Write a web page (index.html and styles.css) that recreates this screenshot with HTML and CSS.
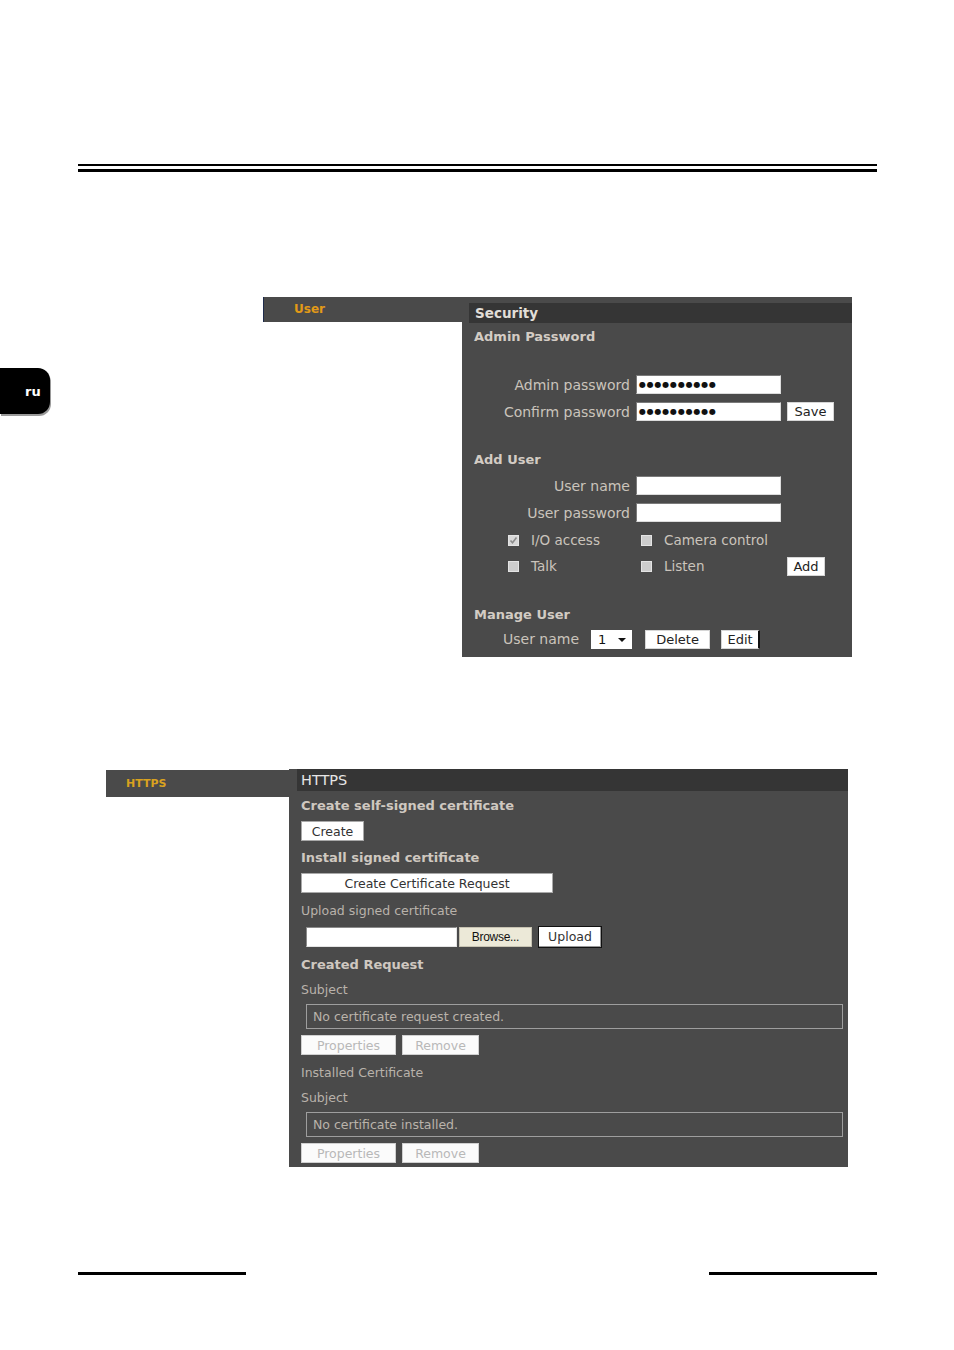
FILE: index.html
```html
<!DOCTYPE html>
<html lang="en">
<head>
    <meta charset="UTF-8">
    <meta name="viewport" content="width=device-width, initial-scale=1.0">
    <title>Security / HTTPS</title>
    <link rel="stylesheet" href="styles.css">
</head>
<body>

    <div class="side-tab">ru</div>

    <div class="page">
        <div class="rule-double">
            <div class="rule-thin"></div>
            <div class="rule-thick"></div>
        </div>

        <!-- Security screen -->
        <div class="shot shot-security">
            <div class="nav">
                <div class="nav-item">User</div>
            </div>
            <div class="panel">
                <div class="panel-head">Security</div>

                <div class="section-title first">Admin Password</div>
                <div class="rows rows-admin">
                    <div class="form-row">
                        <span class="label">Admin password</span>
                        <span class="field pw">●●●●●●●●●●</span>
                    </div>
                    <div class="form-row">
                        <span class="label">Confirm password</span>
                        <span class="field pw">●●●●●●●●●●</span>
                        <button class="btn btn-save">Save</button>
                    </div>
                </div>

                <div class="section-title add-user">Add User</div>
                <div class="rows rows-user">
                    <div class="form-row">
                        <span class="label">User name</span>
                        <span class="field"></span>
                    </div>
                    <div class="form-row">
                        <span class="label">User password</span>
                        <span class="field"></span>
                    </div>
                </div>

                <div class="opts">
                    <div class="opt-row">
                        <span class="opt"><span class="check checked"><svg width="9" height="9" viewBox="0 0 9 9"><path d="M1.5 4.5 L3.5 6.8 L7.5 1.5" fill="none" stroke="#8c8c8c" stroke-width="1.6"/></svg></span>I/O access</span>
                        <span class="opt"><span class="check"></span>Camera control</span>
                    </div>
                    <div class="opt-row">
                        <span class="opt"><span class="check"></span>Talk</span>
                        <span class="opt"><span class="check"></span>Listen</span>
                        <button class="btn btn-add">Add</button>
                    </div>
                </div>

                <div class="section-title manage">Manage User</div>
                <div class="manage-row">
                    <span class="label">User name</span>
                    <span class="select">1<span class="arrow"></span></span>
                    <button class="btn btn-delete">Delete</button>
                    <button class="btn btn-edit">Edit</button>
                </div>
            </div>
        </div>

        <!-- HTTPS screen -->
        <div class="shot shot-https">
            <div class="nav">
                <div class="nav-item">HTTPS</div>
            </div>
            <div class="panel">
                <div class="panel-head">HTTPS</div>

                <div class="h-title t1">Create self-signed certificate</div>
                <button class="hbtn btn-create">Create</button>

                <div class="h-title t2">Install signed certificate</div>
                <button class="hbtn btn-request">Create Certificate Request</button>

                <div class="h-text t3">Upload signed certificate</div>
                <div class="file-row">
                    <span class="file-box"></span>
                    <button class="browse">Browse...</button>
                    <button class="hbtn btn-upload">Upload</button>
                </div>

                <div class="h-title t4">Created Request</div>
                <div class="h-text t5">Subject</div>
                <div class="subject">No certificate request created.</div>
                <div class="btn-pair">
                    <button class="hbtn off btn-props">Properties</button>
                    <button class="hbtn off btn-remove">Remove</button>
                </div>

                <div class="h-text t6">Installed Certificate</div>
                <div class="h-text t5">Subject</div>
                <div class="subject">No certificate installed.</div>
                <div class="btn-pair">
                    <button class="hbtn off btn-props">Properties</button>
                    <button class="hbtn off btn-remove">Remove</button>
                </div>
            </div>
        </div>

        <div class="rule-foot">
            <div class="foot-line"></div>
            <div class="foot-line"></div>
        </div>
    </div>

</body>
</html>
```

FILE: styles.css
```css
body {
    margin: 0;
    background: #fff;
    font-family: "DejaVu Sans", Verdana, sans-serif;
}

.page {
    padding: 0 77px 0 78px;
    height: 1350px;
    box-sizing: border-box;
    overflow: hidden;
}

/* side language tab */
.side-tab {
    position: absolute;
    left: 0;
    top: 368px;
    width: 25px;
    height: 46px;
    padding-left: 25px;
    background: #000;
    color: #fff;
    font-weight: bold;
    font-size: 13px;
    line-height: 48px;
    border-radius: 0 12px 12px 0;
    box-shadow: 1px 2px 0 #9a9a9a;
}

/* top double rule */
.rule-double {
    padding-top: 164px;
}

.rule-thin {
    height: 2px;
    background: #000;
}

.rule-thick {
    height: 3px;
    margin-top: 3px;
    background: #000;
}

/* screenshots */
.shot {
    display: flex;
    align-items: flex-start;
}

.nav-item {
    background: #4a4a4a;
    font-weight: bold;
    box-sizing: border-box;
}

.panel {
    background: #4a4a4a;
    box-sizing: border-box;
    color: #cbc4bc;
}

.panel-head {
    background: #353535;
    color: #e2ded8;
}

button {
    font-family: inherit;
    margin: 0;
    padding: 0;
    cursor: pointer;
}

/* ---------- Security ---------- */
.shot-security {
    margin: 125px 0 0 185px;
}

.shot-security .nav {
    width: 199px;
}

.shot-security .nav-item {
    height: 25px;
    line-height: 25px;
    padding-left: 30px;
    color: #e39a17;
    font-size: 12px;
    border-left: 1px solid #1e2b4c;
}

.shot-security .panel {
    width: 390px;
    height: 360px;
    padding-top: 6px;
}

.shot-security .panel-head {
    margin-left: 7px;
    height: 20px;
    line-height: 21px;
    padding-left: 6px;
    font-weight: bold;
    font-size: 13.5px;
}

.section-title {
    padding-left: 12px;
    font-weight: bold;
    font-size: 13px;
    line-height: 16px;
    color: #d3ccc4;
}

.section-title.first {
    margin-top: 6px;
}

.section-title.add-user {
    margin-top: 27px;
}

.section-title.manage {
    margin-top: 28px;
}

.rows-admin {
    margin-top: 26px;
}

.rows-user {
    margin-top: 4px;
}

.form-row {
    display: grid;
    grid-template-columns: 168px 145px auto;
    column-gap: 6px;
    align-items: center;
    height: 27px;
}

.label {
    font-size: 14px;
    text-align: right;
}

.field {
    height: 19px;
    box-sizing: border-box;
    background: #fff;
    border: 1px solid;
    border-color: #7a7a7a #dcdcdc #dcdcdc #7a7a7a;
}

.field.pw {
    color: #111;
    font-size: 8px;
    letter-spacing: 0.8px;
    line-height: 17px;
    padding-left: 2px;
    overflow: hidden;
    white-space: nowrap;
}

.btn {
    height: 19px;
    background: #fff;
    color: #222;
    font-size: 13px;
    border: 1px solid #d6d6d6;
}

.btn-save {
    width: 47px;
    justify-self: start;
}

.opts {
    margin-top: 1px;
}

.opt-row {
    display: flex;
    align-items: center;
    height: 26px;
    padding-left: 46px;
    font-size: 13.5px;
}

.opt {
    display: flex;
    align-items: center;
    width: 133px;
}

.check {
    display: inline-flex;
    align-items: center;
    justify-content: center;
    width: 11px;
    height: 11px;
    margin-right: 12px;
    box-sizing: border-box;
    background: #cdcdcd;
    border: 1px solid #e4e4e4;
}

.check.checked {
    background: #d8d8d8;
}

.btn-add {
    width: 38px;
    margin-left: 13px;
}

.manage-row {
    display: flex;
    align-items: center;
    height: 26px;
    margin-top: 3px;
    padding-left: 41px;
}

.manage-row .label {
    margin-right: 12px;
}

.select {
    position: relative;
    width: 41px;
    height: 19px;
    box-sizing: border-box;
    background: #fff;
    color: #111;
    font-size: 13px;
    line-height: 19px;
    padding-left: 7px;
    margin-right: 13px;
}

.arrow {
    position: absolute;
    right: 6px;
    top: 8px;
    border-left: 4px solid transparent;
    border-right: 4px solid transparent;
    border-top: 4px solid #111;
}

.btn-delete {
    width: 65px;
    margin-right: 11px;
}

.btn-edit {
    width: 39px;
    border-right: 2px solid #111;
}

/* ---------- HTTPS ---------- */
.shot-https {
    margin: 112px 0 0 28px;
}

.shot-https .nav {
    width: 183px;
    padding-top: 1px;
}

.shot-https .nav-item {
    height: 27px;
    line-height: 27px;
    padding-left: 20px;
    color: #d9a21f;
    font-size: 11px;
}

.shot-https .panel {
    width: 559px;
    height: 398px;
    padding-left: 12px;
}

.shot-https .panel-head {
    margin-left: -4px;
    height: 22px;
    line-height: 22px;
    padding-left: 4px;
    font-size: 14.5px;
    color: #e6e6e6;
}

.h-title {
    font-weight: bold;
    font-size: 13px;
    line-height: 16px;
    color: #cfc8c0;
}

.h-text {
    font-size: 12.5px;
    line-height: 16px;
    color: #b9b2aa;
}

.t1 { margin-top: 7px; }
.t2 { margin-top: 9px; }
.t3 { margin-top: 10px; }
.t4 { margin-top: 10px; }
.t5 { margin-top: 9px; }
.t6 { margin-top: 10px; }

.hbtn {
    display: block;
    height: 20px;
    margin-top: 7px;
    background: #fff;
    color: #333;
    font-size: 12.5px;
    border: 1px solid #a9a9a9;
}

.btn-create {
    width: 63px;
}

.btn-request {
    width: 252px;
}

.file-row {
    display: flex;
    align-items: center;
    height: 21px;
    margin-top: 7px;
    padding-left: 5px;
}

.file-box {
    width: 151px;
    height: 20px;
    box-sizing: border-box;
    background: #fff;
    border: 1px solid;
    border-color: #8a8a8a #e4e4e4 #e4e4e4 #8a8a8a;
}

.browse {
    width: 73px;
    height: 20px;
    margin-left: 2px;
    background: #ece9d8;
    border: 1px solid #c7c3b2;
    color: #111;
    font-family: "Liberation Sans", Arial, sans-serif;
    font-size: 12px;
    letter-spacing: -0.3px;
}

.btn-upload {
    width: 64px;
    height: 22px;
    margin: 0 0 0 6px;
    border: 1px solid #111;
    box-shadow: inset -1px -1px 0 #999;
    font-size: 12.5px;
}

.subject {
    height: 25px;
    box-sizing: border-box;
    margin: 6px 5px 0 5px;
    border: 1px solid #9e9e9e;
    padding-left: 6px;
    line-height: 23px;
    font-size: 12.5px;
    color: #bab3ab;
}

.btn-pair {
    display: flex;
    gap: 6px;
    margin-top: 6px;
}

.btn-pair .hbtn {
    margin-top: 0;
}

.hbtn.off {
    background: #fbfbfb;
    color: #b8b8b8;
    border-color: #d0d0d0;
}

.btn-props {
    width: 95px;
}

.btn-remove {
    width: 77px;
}

/* bottom rules */
.rule-foot {
    display: flex;
    justify-content: space-between;
    margin-top: 105px;
}

.foot-line {
    width: 168px;
    height: 3px;
    background: #000;
}
```
